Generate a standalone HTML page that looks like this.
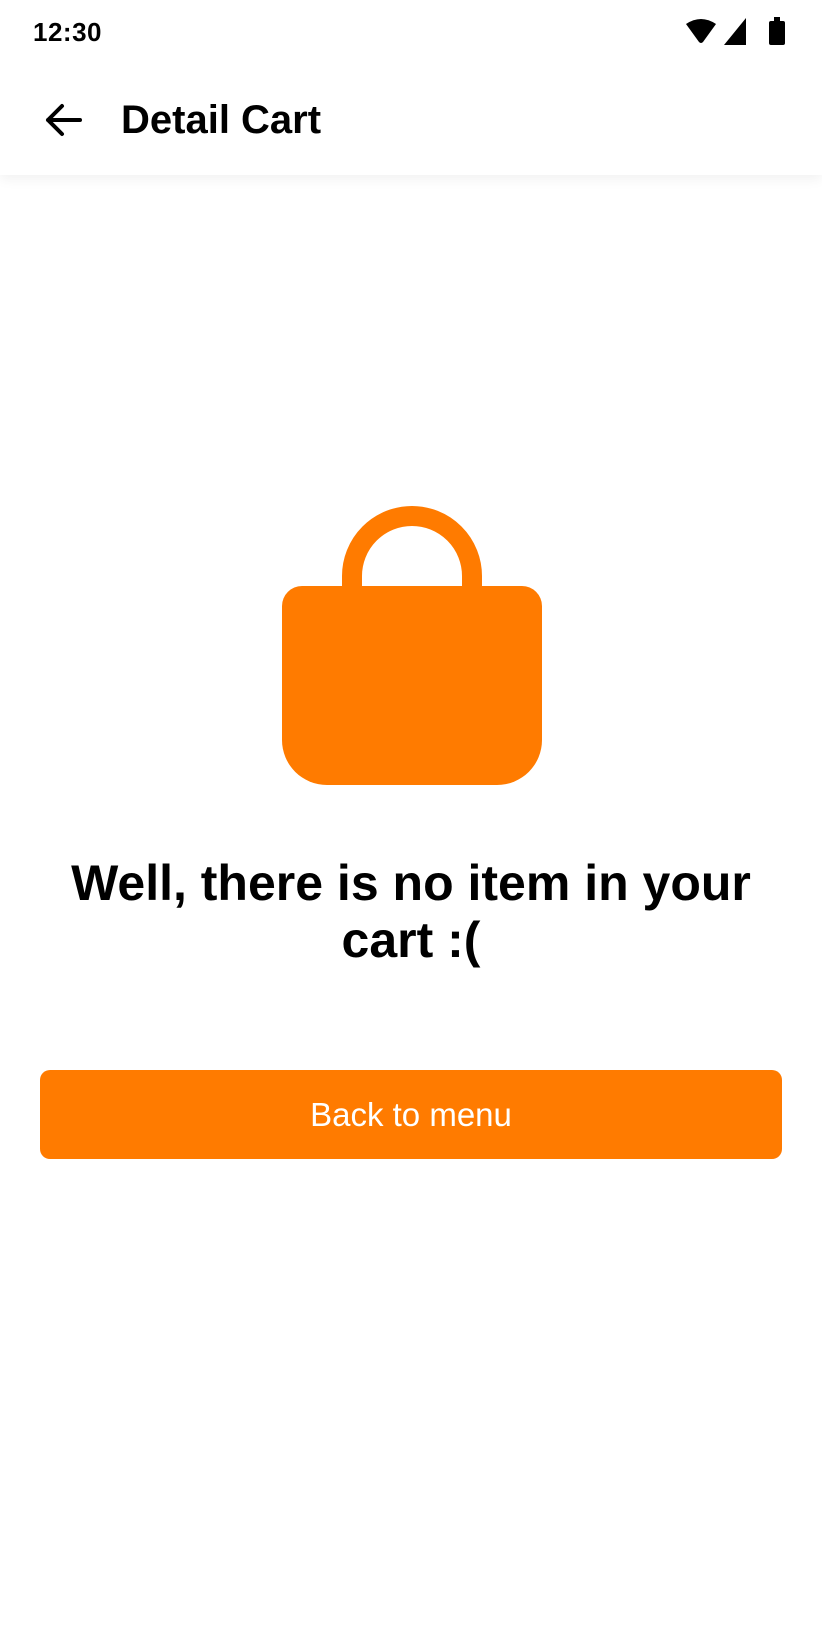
<!DOCTYPE html>
<html><head><meta charset="utf-8">
<style>
html,body{margin:0;padding:0;background:#fff;}
body{width:822px;height:1646px;position:relative;overflow:hidden;font-family:"Liberation Sans",sans-serif;color:#000;}
.abs{position:absolute;}
#hdr{left:0;top:0;width:822px;height:175px;background:#fff;box-shadow:0 4px 12px rgba(0,0,0,0.06);}
</style></head><body>
<div id="hdr" class="abs"></div>
<div class="abs" style="left:33px;top:14px;font-size:26px;font-weight:bold;line-height:36px;letter-spacing:0.5px;">12:30</div>
<svg class="abs" style="left:680px;top:14px" width="110" height="36" viewBox="680 14 110 36">
  <path d="M686 24 Q701 14 716 24 L703 42 Q701 44 699 42 Z" fill="#000"/>
  <path d="M724 45 L746 18 L746 45 Z" fill="#000"/>
  <rect x="769" y="21" width="16" height="24" rx="2" fill="#000"/>
  <rect x="774" y="17" width="6" height="5" fill="#000"/>
</svg>
<svg class="abs" style="left:40px;top:100px" width="46" height="40" viewBox="40 100 46 40">
  <path d="M80 120 H48 M62 106 L48 120 L62 134" stroke="#000" stroke-width="4" fill="none" stroke-linecap="round" stroke-linejoin="round"/>
</svg>
<div class="abs" style="left:121px;top:96px;font-size:40px;font-weight:bold;line-height:48px;">Detail Cart</div>

<svg class="abs" style="left:270px;top:495px" width="290" height="300" viewBox="270 495 290 300">
  <path d="M352 586 V576 A60 60 0 0 1 472 576 V586" stroke="#FF7B00" stroke-width="20" fill="none"/>
  <path d="M302 586 H522 A20 20 0 0 1 542 606 V740 A45 45 0 0 1 497 785 H327 A45 45 0 0 1 282 740 V606 A20 20 0 0 1 302 586 Z" fill="#FF7B00"/>
</svg>

<div class="abs" style="left:0;top:855px;width:822px;text-align:center;font-size:50px;font-weight:bold;line-height:57px;">Well, there is no item in your<br>cart :(</div>

<div class="abs" style="left:40px;top:1070px;width:742px;height:89px;background:#FF7B00;border-radius:10px;color:#fff;font-size:33px;text-align:center;line-height:89px;">Back to menu</div>
</body></html>
